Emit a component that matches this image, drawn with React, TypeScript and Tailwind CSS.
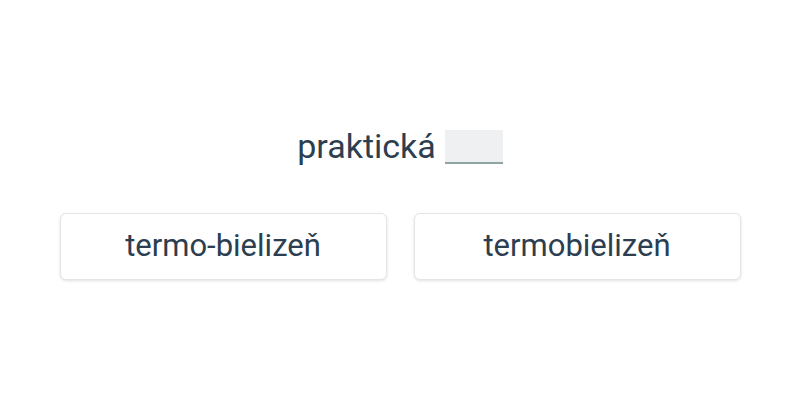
export default function App() {
  const options = ['termo-bielizeň', 'termobielizeň']
  return (
    <div className="w-[800px] h-[400px] bg-white flex flex-col items-center pt-[124px]" style={{ fontFamily: 'Roboto, "Noto Sans", sans-serif' }}>
      <div className="flex items-end text-[34px] leading-[44px] text-[#2c3e50]">
        <span>praktická</span>
        <span className="ml-[9px] mb-[4px] w-[58px] h-[34px] bg-[#eef0f2] border-b-2 border-[#90a4a4]" />
      </div>
      <div className="mt-[45px] flex gap-[27px]">
        {options.map((o) => (
          <button
            key={o}
            className="w-[327px] h-[67px] rounded-md bg-white border border-[#e3e5e8] shadow-[0_1px_3px_rgba(0,0,0,0.12)] text-[31px] text-[#2c3e50]"
          >
            {o}
          </button>
        ))}
      </div>
    </div>
  )
}
